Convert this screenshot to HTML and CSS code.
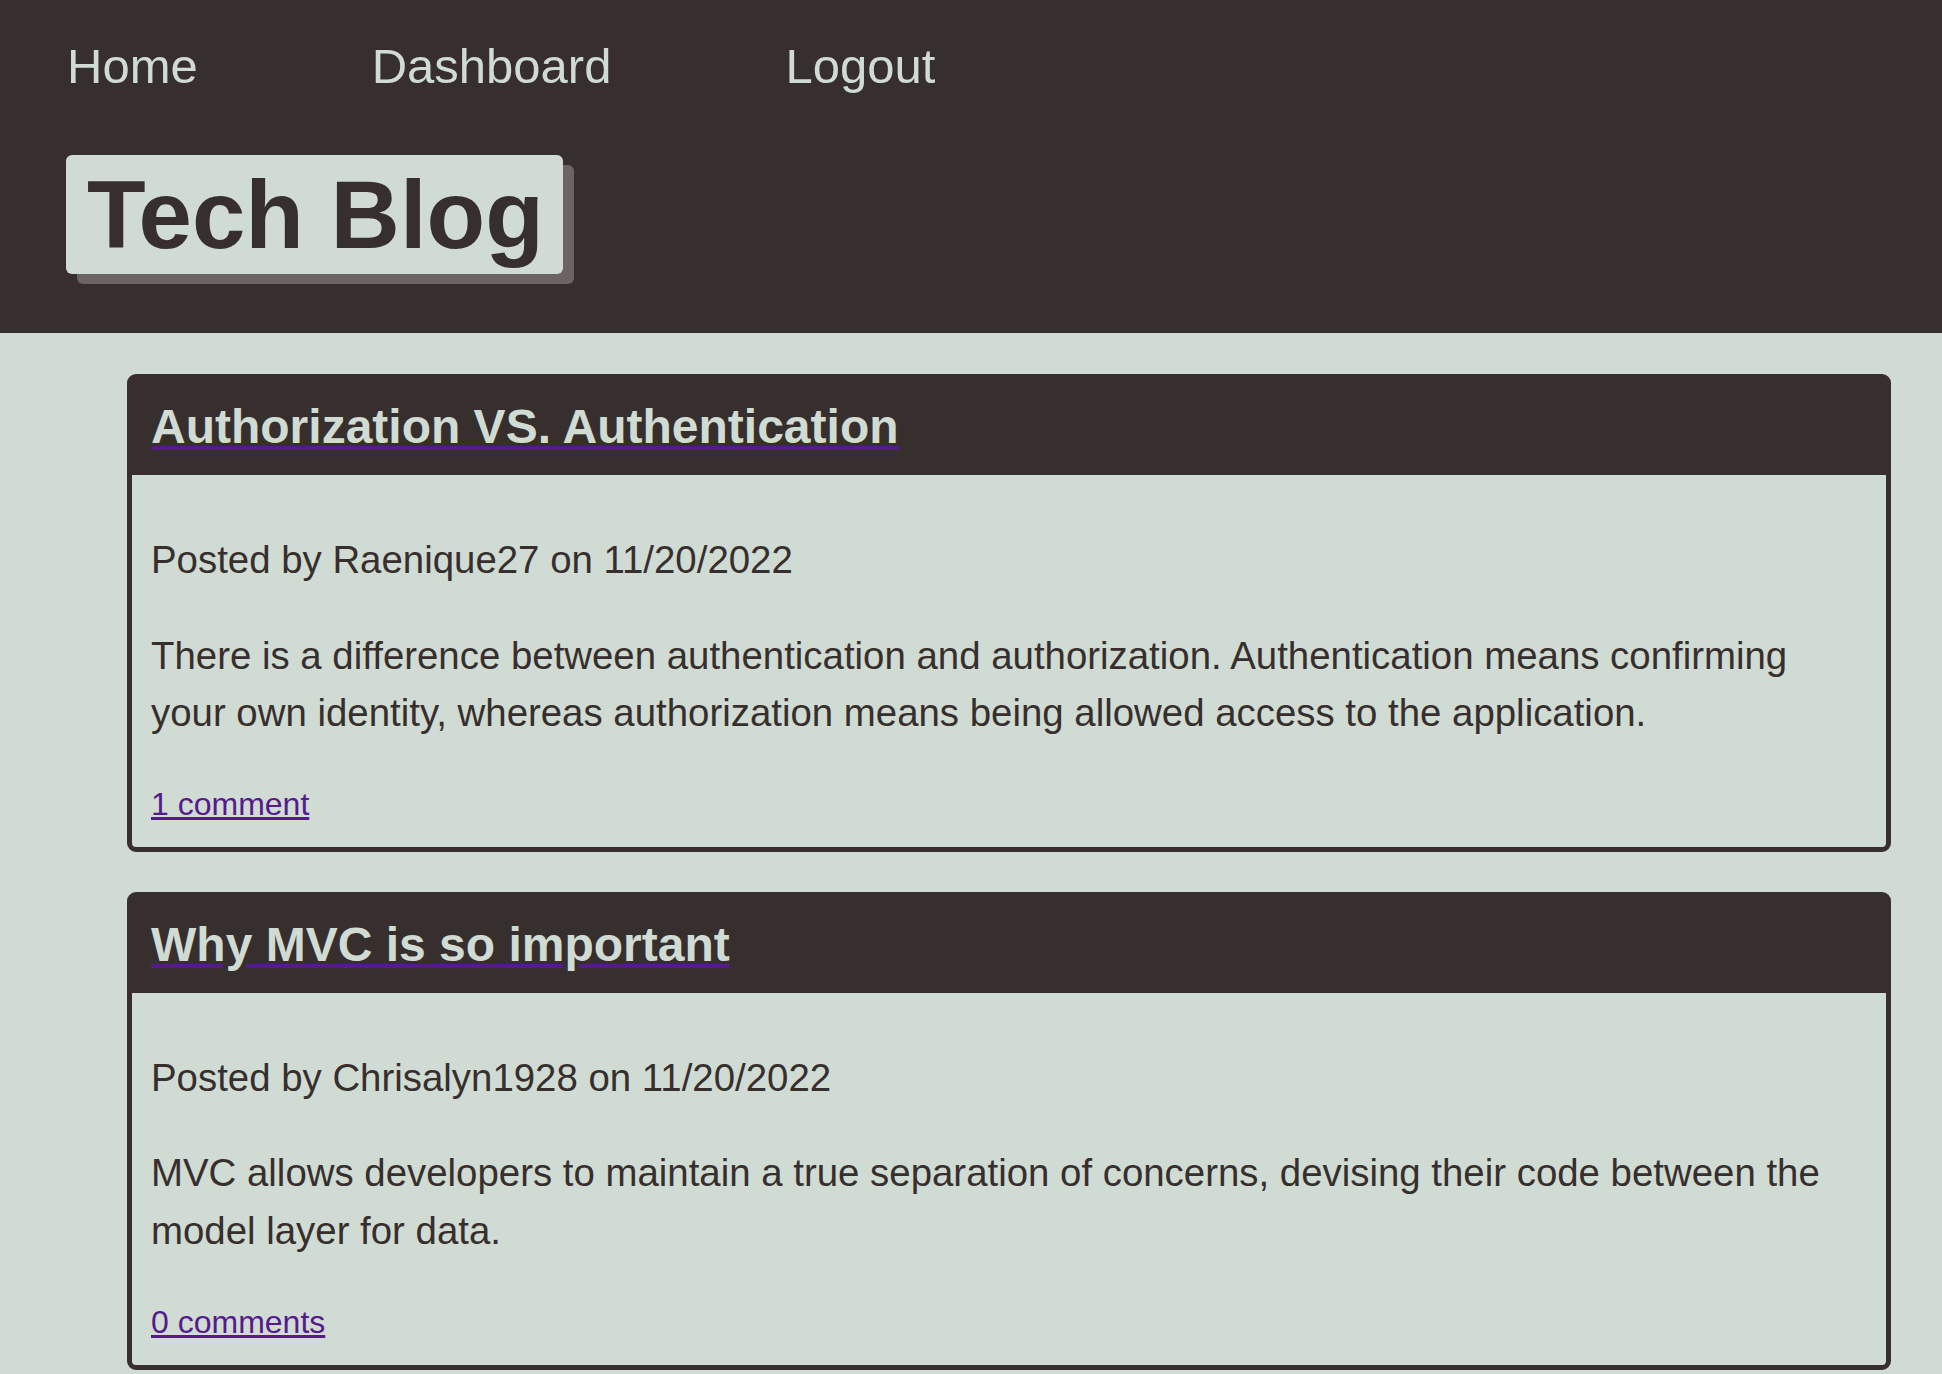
FILE: index.html
```html
<!DOCTYPE html>
<html lang="en">
<head>
<meta charset="utf-8">
<title>Tech Blog</title>
<link rel="stylesheet" href="styles.css">
</head>
<body>
<header class="site-header">
  <nav class="nav">
    <a class="nav-link" href="#">Home</a>
    <a class="nav-link" href="#">Dashboard</a>
    <a class="nav-link" href="#">Logout</a>
  </nav>
  <h1 class="brand">Tech Blog</h1>
</header>
<main class="posts">
  <article class="post">
    <div class="post-head">
      <a class="post-link" href="#"><h2 class="post-title">Authorization VS. Authentication</h2></a>
    </div>
    <div class="post-body">
      <p class="post-meta">Posted by Raenique27 on 11/20/2022</p>
      <p class="post-text">There is a difference between authentication and authorization. Authentication means confirming your own identity, whereas authorization means being allowed access to the application.</p>
      <p class="post-comments"><a class="comment-link" href="#">1 comment</a></p>
    </div>
  </article>
  <article class="post">
    <div class="post-head">
      <a class="post-link" href="#"><h2 class="post-title">Why MVC is so important</h2></a>
    </div>
    <div class="post-body">
      <p class="post-meta">Posted by Chrisalyn1928 on 11/20/2022</p>
      <p class="post-text">MVC allows developers to maintain a true separation of concerns, devising their code between the model layer for data.</p>
      <p class="post-comments"><a class="comment-link" href="#">0 comments</a></p>
    </div>
  </article>
</main>
</body>
</html>
```

FILE: styles.css
```css
html, body {
  margin: 0;
  padding: 0;
}

body {
  background: #d0dbd3;
  color: #372f2d;
  font-family: "Liberation Sans", Arial, Helvetica, sans-serif;
}

.site-header {
  background: #372f2d;
  padding: 39px 0 59px 66px;
}

.nav {
  display: flex;
  gap: 174px;
  padding-left: 1px;
}

.nav-link {
  color: #d0dbd3;
  text-decoration: none;
  font-size: 49px;
  line-height: 55px;
}

.brand {
  display: inline-block;
  margin: 61px 0 0;
  padding: 5px 19px 4px 21px;
  background: #d0dbd3;
  color: #372f2d;
  font-size: 96px;
  font-weight: bold;
  line-height: 110px;
  border-radius: 6px;
  box-shadow: 11px 10px 0 #6b6462;
}

.posts {
  padding: 41px 51px 0 127px;
}

.post {
  border: 5px solid #372f2d;
  border-radius: 9px;
  margin-bottom: 40px;
  background: #d0dbd3;
}

.post-head {
  background: #372f2d;
  padding: 20px 19px 21px;
}

.post-link {
  color: #551a8b;
  text-decoration: underline;
}

.post-title {
  margin: 0;
  color: #d0dbd3;
  font-size: 48px;
  font-weight: bold;
  line-height: 55px;
}

.post-body {
  padding: 18px 19px 19px;
}

.post-meta,
.post-text {
  margin: 38px 0 0;
  font-size: 38.4px;
  line-height: 1.5;
}

.post-comments {
  margin: 38px 0 0;
  font-size: 32px;
  line-height: 48px;
}

.comment-link {
  color: #551a8b;
}
```
